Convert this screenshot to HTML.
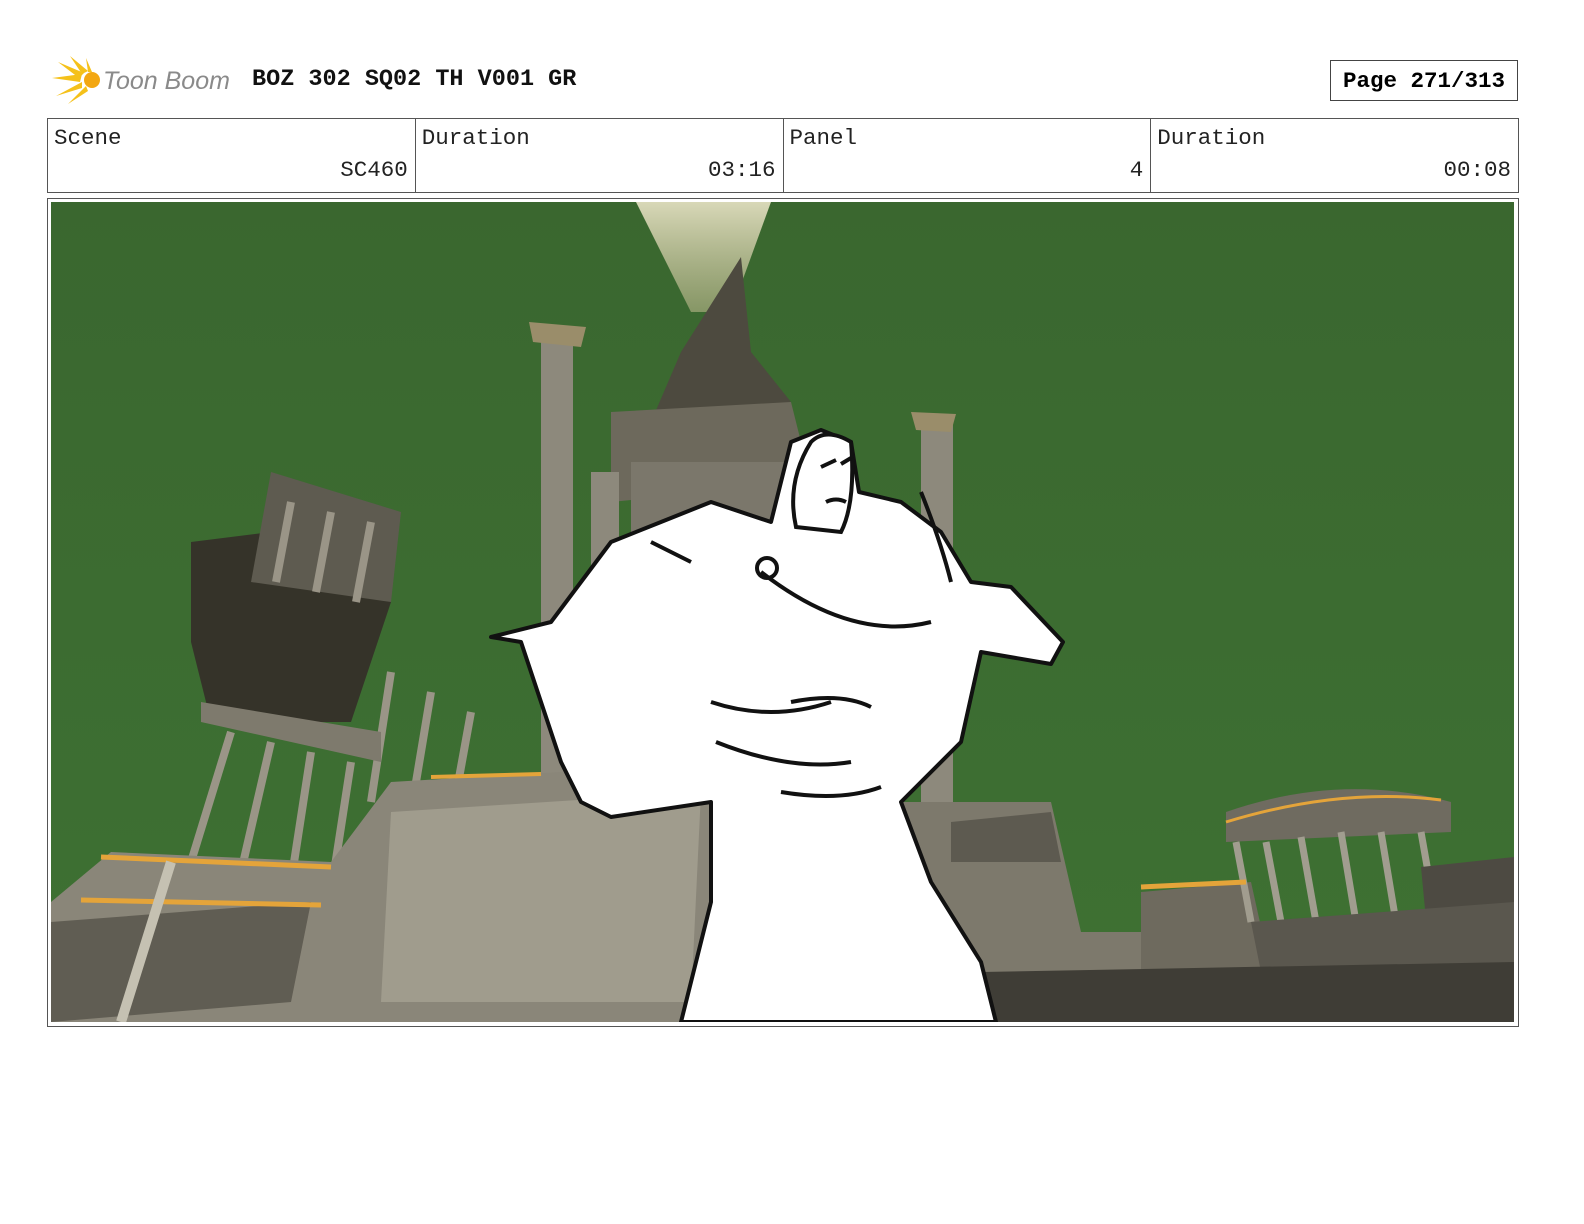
<!DOCTYPE html>
<html><head><meta charset="utf-8"><style>
body{margin:0;background:#fff;width:1584px;height:1224px;position:relative;font-family:"Liberation Mono",monospace;overflow:hidden}
.t{position:absolute}
.logo{left:52px;top:56px}
.title{left:252px;top:66px;font-weight:bold;font-size:23.5px;color:#111}
.page{left:1330px;top:60px;width:188px;height:41px;border:1px solid #444;box-sizing:border-box;font-weight:bold;font-size:22.5px;text-align:center;line-height:40px}
table{position:absolute;left:47px;top:118px;width:1472px;height:75px;border-collapse:collapse}
td{border:1px solid #555;width:25%;vertical-align:top;font-size:22.5px;color:#222;padding:0 6px;position:relative}
td .v{position:absolute;right:7px;bottom:9px}
td .l{position:absolute;left:6px;top:6px}
.frame{left:47px;top:198px;width:1472px;height:829px;border:1px solid #555;box-sizing:border-box}
svg.img{position:absolute;left:51px;top:202px}
</style></head><body>
<svg class="t logo" width="190" height="50" viewBox="0 0 190 50">
<g fill="#f5c11a"><path d="M0 22 L30 18 L28 26Z"/><path d="M6 6 L32 17 L27 22Z"/><path d="M18 0 L36 15 L30 18Z"/><path d="M4 40 L30 26 L30 32Z"/><path d="M16 48 L34 30 L36 35Z"/><path d="M34 2 L40 16 L36 16Z"/></g>
<circle cx="40" cy="24" r="8" fill="#f3a712"/>
<text x="51" y="33" font-family="Liberation Sans" font-style="italic" font-size="25" fill="#8a8a8a">Toon Boom</text>
</svg>
<div class="t title">BOZ 302 SQ02 TH V001 GR</div>
<div class="t page">Page 271/313</div>
<table><tr>
<td><span class="l">Scene</span><span class="v">SC460</span></td>
<td><span class="l">Duration</span><span class="v">03:16</span></td>
<td><span class="l">Panel</span><span class="v">4</span></td>
<td><span class="l">Duration</span><span class="v">00:08</span></td>
</tr></table>
<div class="t frame"></div>
<svg class="img" width="1463" height="820" viewBox="0 0 1463 820">
<defs>
<linearGradient id="beam" x1="0" y1="0" x2="0" y2="1"><stop offset="0" stop-color="#f4ecd0"/><stop offset="1" stop-color="#cfc39a" stop-opacity="0.6"/></linearGradient>
<linearGradient id="g" x1="0" y1="0" x2="0" y2="1"><stop offset="0" stop-color="#3a672f"/><stop offset="1" stop-color="#3e7133"/></linearGradient>
</defs>
<rect width="1463" height="820" fill="url(#g)"/>
<path d="M585 0 L720 0 L680 110 L640 110Z" fill="url(#beam)" opacity="0.85"/>
<path d="M690 55 L700 150 L740 200 L600 220 L630 150Z" fill="#4d4a3f"/>
<path d="M560 210 L740 200 L760 280 L560 300Z" fill="#6d695c"/>
<rect x="580" y="260" width="160" height="360" fill="#7b776b"/>
<g fill="#8d897c"><rect x="490" y="130" width="32" height="520"/><rect x="540" y="270" width="28" height="400"/><rect x="870" y="220" width="32" height="420"/></g>
<path d="M478 120 L535 125 L530 145 L482 140Z" fill="#9a8d6a"/>
<path d="M860 210 L905 212 L900 230 L865 228Z" fill="#9a8d6a"/>
<path d="M140 340 L300 320 L340 400 L300 520 L160 520 L140 440Z" fill="#353329"/>
<path d="M220 270 L350 310 L340 400 L200 380Z" fill="#5e5b50"/>
<g stroke="#9a9587" stroke-width="8"><line x1="240" y1="300" x2="225" y2="380"/><line x1="280" y1="310" x2="265" y2="390"/><line x1="320" y1="320" x2="305" y2="400"/>
<line x1="180" y1="530" x2="140" y2="660"/><line x1="220" y1="540" x2="190" y2="670"/><line x1="260" y1="550" x2="240" y2="680"/><line x1="300" y1="560" x2="280" y2="690"/>
<line x1="340" y1="470" x2="320" y2="600"/><line x1="380" y1="490" x2="360" y2="610"/><line x1="420" y1="510" x2="400" y2="620"/></g>
<path d="M150 500 L330 530 L330 560 L150 520Z" fill="#7e7a6d"/>
<path d="M0 700 L60 650 L280 660 L340 580 L680 560 L660 820 L0 820Z" fill="#8a8679"/>
<path d="M0 720 L260 700 L240 800 L0 820Z" fill="#605d53"/>
<path d="M340 610 L650 590 L640 800 L330 800Z" fill="#a09c8d"/>
<path d="M50 655 L280 665" stroke="#e4a43a" stroke-width="5"/>
<path d="M30 698 L270 703" stroke="#e4a43a" stroke-width="5"/>
<path d="M380 575 L490 572" stroke="#e4a43a" stroke-width="4"/>
<path d="M70 820 L120 660" stroke="#c5c1b2" stroke-width="10"/>
<path d="M850 600 L1000 600 L1030 730 L1100 730 L1100 780 L850 820Z" fill="#7d796c"/>
<path d="M900 620 L1000 610 L1010 660 L900 660Z" fill="#5d5a50"/>
<path d="M1090 690 L1200 680 L1220 770 L1090 780Z" fill="#6e6a5e"/>
<path d="M1175 610 Q1290 570 1400 600 L1400 630 L1175 640Z" fill="#6f6b60"/>
<g stroke="#a19d8f" stroke-width="7"><line x1="1185" y1="640" x2="1200" y2="720"/><line x1="1215" y1="640" x2="1230" y2="720"/><line x1="1250" y1="635" x2="1265" y2="720"/><line x1="1290" y1="630" x2="1305" y2="720"/><line x1="1330" y1="630" x2="1345" y2="720"/><line x1="1370" y1="630" x2="1385" y2="715"/></g>
<path d="M1090 685 L1195 680" stroke="#e4a43a" stroke-width="5"/>
<path d="M1370 665 L1463 655 L1463 760 L1380 770Z" fill="#4d4a42"/>
<path d="M1200 720 L1463 700 L1463 770 L1210 770Z" fill="#5a574e"/>
<path d="M930 770 L1463 760 L1463 820 L930 820Z" fill="#3f3d36"/>
<path d="M1175 620 Q1290 585 1390 598" stroke="#e4a43a" stroke-width="3" fill="none"/>
<path d="M440 435 L500 420 L560 340 L610 320 L660 300 L720 320 L740 240 L770 228 L800 240 L808 290 L850 300 L890 330 L920 380 L960 385 L1012 440 L1000 462 L930 450 L910 540 L850 600 L880 680 L930 760 L945 820 L630 820 L660 700 L660 600 L560 615 L530 600 L510 560 L470 440Z" fill="#fff" stroke="#111" stroke-width="4" stroke-linejoin="round"/>
<path d="M760 240 Q775 225 800 240 Q805 300 790 330 L745 325 Q735 280 760 240Z" fill="#fff" stroke="#111" stroke-width="4"/>
<g stroke="#111" stroke-width="4" fill="none"><path d="M770 265 L785 258"/><path d="M790 262 L800 256"/><path d="M775 300 Q785 295 795 300"/><path d="M710 370 Q800 440 880 420"/><path d="M660 500 Q720 520 780 500"/><path d="M740 500 Q790 490 820 505"/><path d="M730 590 Q790 600 830 585"/><path d="M665 540 Q740 570 800 560"/><path d="M870 290 Q890 340 900 380"/><path d="M600 340 L640 360"/><circle cx="716" cy="366" r="10"/></g>
</svg>
</body></html>
